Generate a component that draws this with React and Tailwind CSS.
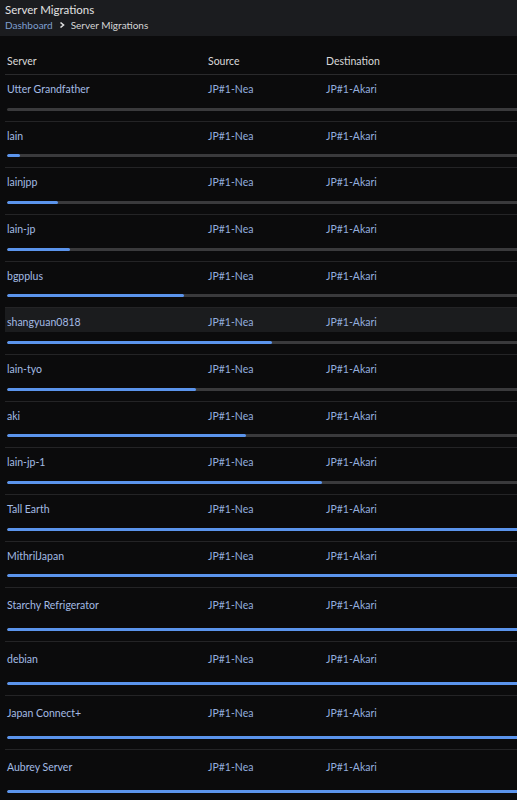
import React from "react";

const migrations = [
  { name: "Utter Grandfather", done: 0 },
  { name: "lain", done: 13 },
  { name: "lainjpp", done: 51 },
  { name: "lain-jp", done: 63 },
  { name: "bgpplus", done: 177 },
  { name: "shangyuan0818", done: 265, hover: true },
  { name: "lain-tyo", done: 189 },
  { name: "aki", done: 239 },
  { name: "lain-jp-1", done: 315 },
  { name: "Tall Earth", done: 800 },
  { name: "MithrilJapan", done: 800 },
  { name: "Starchy Refrigerator", done: 800, tall: true },
  { name: "debian", done: 800, tall: true },
  { name: "Japan Connect+", done: 800, tall: true },
  { name: "Aubrey Server", done: 800, tall: true },
];

function MigrationRow({ m }) {
  return (
    <div className="border-b border-[#242426]">
      <div
        className={`flex items-center px-[2px] ${m.tall ? "h-[31px] pt-[4px]" : "h-[23.67px] pt-[6px]"} ${
          m.hover ? "bg-[#1b1c1e]" : ""
        }`}
      >
        <div className="w-[201px] text-[#a3bbe4]">{m.name}</div>
        <div className="w-[118px] text-[#93aedf]">JP#1-Nea</div>
        <div className="w-[160px] text-[#93aedf]">JP#1-Akari</div>
      </div>
      <div className="h-[22px] px-[2px] pt-[9px]">
        <div className="h-[3px] w-[800px] rounded-full bg-[#3a3a3c] overflow-hidden">
          <div className="h-full rounded-full bg-[#5b94ec]" style={{ width: m.done }} />
        </div>
      </div>
    </div>
  );
}

export default function App() {
  return (
    <div className="min-h-[800px] w-[517px] overflow-hidden bg-[#0b0b0c] font-['Lato','Noto_Sans',sans-serif] text-[10.5px]">
      {/* Page header */}
      <div className="h-[36px] bg-[#1b1c1f] px-[5px] pt-[2px]">
        <div className="text-[11.5px] leading-[15px] text-[#e2e2e2]">Server Migrations</div>
        <div className="mt-[1px] flex items-center gap-[4px] text-[10px] leading-[14px]">
          <span className="text-[#7f9fd0]">Dashboard</span>
          <svg width="8" height="8" viewBox="0 0 8 8" className="mx-[1px]">
            <path d="M2.5 1.5 L5.5 4 L2.5 6.5" stroke="#e0e0e0" strokeWidth="1.6" fill="none" />
          </svg>
          <span className="text-[#d6d6d6]">Server Migrations</span>
        </div>
      </div>

      {/* Migrations table */}
      <div className="pl-[5px] pt-[13px]">
        <div className="flex h-[26px] items-center border-b border-[#2a2a2c] px-[2px] text-[#d8d8d8]">
          <div className="w-[201px]">Server</div>
          <div className="w-[118px]">Source</div>
          <div className="w-[160px]">Destination</div>
        </div>
        {migrations.map((m) => (
          <MigrationRow key={m.name} m={m} />
        ))}
      </div>
    </div>
  );
}
